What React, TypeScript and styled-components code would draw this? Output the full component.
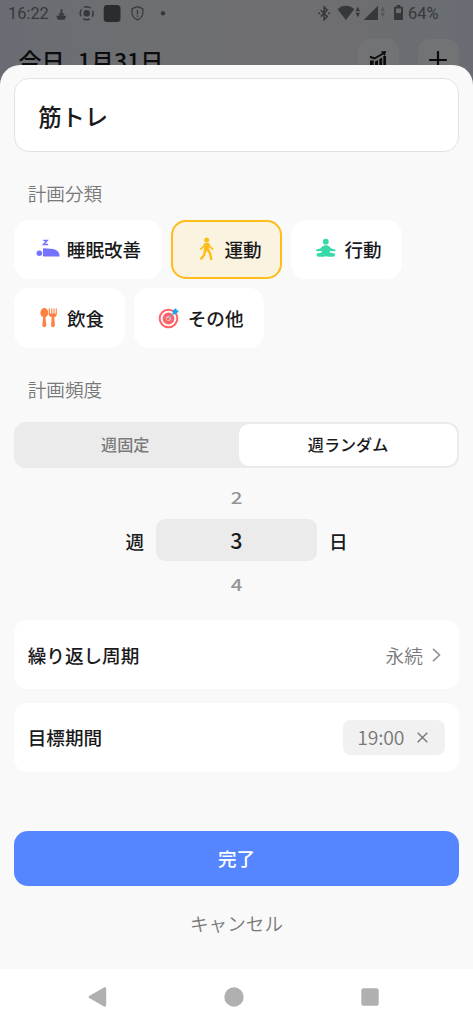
import React, { useState } from 'react';
import styled, { createGlobalStyle } from 'styled-components';

const GlobalStyle = createGlobalStyle`
  * { box-sizing: border-box; }
  body {
    margin: 0;
    background: #6d6e72;
    font-family: "Noto Sans CJK JP", sans-serif;
    color: #1a1a1c;
  }
  button { font: inherit; color: inherit; border: 0; padding: 0; background: none; }
  svg { display: block; flex: none; }
`;

const Screen = styled.div`
  width: 473px;
  height: 1024px;
  display: flex;
  flex-direction: column;
  overflow: hidden;
  background: linear-gradient(90deg, #696d73 0%, #6e6f72 35%, #6e6e71 75%, #696d73 100%);
`;

const StatusBar = styled.div`
  height: 27px;
  flex: none;
  display: flex;
  justify-content: space-between;
  padding: 0 35px 0 8px;
  font: 16.4px/27px Roboto, sans-serif;
  color: #36383b;
`;

const StatusGroup = styled.div`
  display: flex;
  align-items: center;
`;

const StatusText = styled.span<{ $w: number }>`
  width: ${p => p.$w}px;
  white-space: nowrap;
`;

const Header = styled.header`
  height: 37.5px;
  flex: none;
  display: flex;
  justify-content: space-between;
  padding: 12px 14px 0 18.5px;
`;

const HeaderTitle = styled.h1`
  margin: 4px 0 0;
  display: flex;
  gap: 13px;
  font-size: 23.1px;
  line-height: 34px;
  height: 34px;
  font-weight: 500;
  color: #0c0c0d;
`;

const HeaderActions = styled.div`
  display: flex;
  gap: 18.5px;
`;

const HeaderButton = styled.button`
  width: 41.5px;
  height: 41.5px;
  border-radius: 12px;
  background: #727375;
  display: flex;
  align-items: center;
  justify-content: center;
`;

const Sheet = styled.main`
  position: relative;
  height: 904px;
  flex: none;
  display: flex;
  flex-direction: column;
  padding: 13.5px 13.7px 0;
  border-radius: 20px 20px 0 0;
  background: #f9f9f9;
`;

const NameInput = styled.input`
  height: 73.5px;
  flex: none;
  width: 100%;
  border: 1px solid #e2e2e4;
  border-radius: 15px;
  background: #fff;
  padding: 2px 23.5px 0;
  font: 500 23.3px "Noto Sans CJK JP", sans-serif;
  color: #1a1a1c;
  outline: none;
`;

const SectionLabel = styled.h2<{ $top: number; $bottom: number }>`
  margin: ${p => p.$top}px 14px ${p => p.$bottom}px;
  font-size: 18.6px;
  line-height: 28px;
  font-weight: 350;
  color: #787878;
`;

const Chips = styled.div`
  display: flex;
  flex-wrap: wrap;
  gap: 9.3px;
`;

const Chip = styled.button<{ $active: boolean; $w: number }>`
  width: ${p => p.$w}px;
  height: 59.5px;
  display: flex;
  align-items: center;
  justify-content: flex-end;
  gap: 6.5px;
  padding: 0 18.5px 0 0;
  border: 2px solid ${p => (p.$active ? '#ffbd1a' : '#fff')};
  border-radius: 15px;
  background: ${p => (p.$active ? '#faf3e0' : '#fff')};
  font-size: 18.6px;
  font-weight: 500;
`;

const ChipIcon = styled.span`
  width: 24px;
  display: flex;
  justify-content: center;
`;

const ChipLabel = styled.span`
  line-height: 28px;
  padding-bottom: 1px;
`;

const Segments = styled.div`
  height: 46px;
  flex: none;
  display: flex;
  padding: 2px;
  border-radius: 12px;
  background: #ebebeb;
`;

const Segment = styled.button<{ $active: boolean }>`
  flex: ${p => (p.$active ? '0 0 218.5px' : '1')};
  padding: ${p => (p.$active ? '0 0 2px' : '0 4px 2px 0')};
  border-radius: 10px;
  background: ${p => (p.$active ? '#fff' : 'transparent')};
  color: ${p => (p.$active ? '#1a1a1c' : '#7a7a7a')};
  font-size: 16.1px;
  font-weight: 500;
`;

const Picker = styled.div`
  display: flex;
  justify-content: center;
  align-items: center;
  gap: 12px;
  margin-top: 8.2px;
  font-size: 18.6px;
  font-weight: 500;
`;

const Wheel = styled.div`
  width: 161px;
  display: flex;
  flex-direction: column;
  gap: 2px;
`;

const WheelOption = styled.span`
  height: 41.5px;
  line-height: 42.5px;
  text-align: center;
  font-size: 20.5px;
  color: #949494;
  transform: scaleY(0.8);
`;

const WheelValue = styled.span`
  height: 41.5px;
  border-radius: 9px;
  background: #ebebeb;
  text-align: center;
  font-size: 21.5px;
  line-height: 42px;
`;

const SettingRow = styled.section<{ $top: number }>`
  margin-top: ${p => p.$top}px;
  height: 69.3px;
  flex: none;
  display: flex;
  align-items: center;
  justify-content: space-between;
  padding: 0 14px;
  border-radius: 14px;
  background: #fff;
  font-size: 18.6px;
`;

const RowLabel = styled.span`
  padding-bottom: 1px;
  font-weight: 500;
`;

const RowValue = styled.span`
  display: flex;
  align-items: center;
  gap: 9px;
  padding-right: 4.5px;
  font-weight: 350;
  color: #787878;
`;

const TimeTag = styled.button`
  width: 102px;
  height: 35.5px;
  display: flex;
  align-items: center;
  justify-content: space-between;
  padding: 0 17px 0 14px;
  border-radius: 8px;
  background: #f1f1f1;
  color: #787878;
  font-size: 19.4px;
  letter-spacing: -0.2px;
  font-weight: 350;
`;

const TimeText = styled.span`
  padding-bottom: 1px;
`;

const SubmitButton = styled.button`
  margin-top: 58.6px;
  height: 55px;
  flex: none;
  padding-bottom: 2px;
  border-radius: 14px;
  background: #5686ff;
  color: #fff;
  font-size: 18.6px;
  font-weight: 500;
`;

const CancelButton = styled.button`
  margin: 23px auto 0;
  height: 28px;
  font-size: 18.6px;
  line-height: 28px;
  font-weight: 350;
  color: #787878;
`;

const NavBar = styled.nav`
  flex: 1;
  display: flex;
  align-items: center;
  justify-content: space-between;
  padding: 2px 94.5px 0 88px;
  background: #fff;
`;

const StatusIconsLeft = () => (
  <svg width="120" height="27" viewBox="50 0 120 27" fill="#36383b">
    <path d="M60.8 9h1.5v4.5h1.6v2h-5v-2h1.5v-2.7h.4zM56.2 15.8h10l-1.6 3.9h-6.8z" />
    <circle cx="86.7" cy="13.3" r="3.2" />
    <circle cx="86.7" cy="13.3" r="6.5" fill="none" stroke="#36383b" strokeWidth="1.5" strokeDasharray="7.2 3" strokeDashoffset="3.6" />
    <rect x="103.7" y="5" width="16.8" height="17" rx="3.5" fill="#2a2c2e" />
    <path d="M137.4 6.6l5.4 2v4.1c0 3.3-2.2 5.8-5.4 7.2-3.2-1.4-5.4-3.9-5.4-7.2V8.6z" fill="none" stroke="#36383b" strokeWidth="1.2" />
    <path d="M136.8 9.7h1.3v4.6h-1.3zM136.8 15.4h1.3v1.4h-1.3z" />
    <circle cx="163" cy="13.2" r="2.2" />
  </svg>
);

const StatusIconsRight = () => (
  <svg width="92" height="27" viewBox="316 0 92 27" fill="#36383b">
    <path d="M320.7 10l6.5 6.5-3.1 3.1V7l3.1 3.1-6.5 6.5" fill="none" stroke="#36383b" strokeWidth="1.5" />
    <circle cx="319.2" cy="13.3" r="1" />
    <circle cx="329" cy="13.3" r="1" />
    <path d="M337.6 9.3c4.8-4.6 11.8-4.6 16.6 0L345.9 20z" />
    <path d="M357.8 6.8l2.3 4.5h-4.6zM357.8 17.3l2.3-4.5h-4.6z" />
    <path d="M378 5.7V20h-14.3z" />
    <path d="M382.8 6.8l2.2 4.5h-4.4zM382.8 17.3l2.2-4.5h-4.4z" fill="#55575a" />
    <path fillRule="evenodd" d="M396.7 5h3.7v1.7h1.6c.6 0 1 .4 1 1v11.2c0 .6-.4 1-1 1h-7c-.6 0-1-.4-1-1V7.7c0-.6.4-1 1-1h1.7zM396 8.5v4.5h5V8.5z" />
  </svg>
);

const ChartIcon = () => (
  <svg width="18" height="20" viewBox="0 0 18 20" fill="#0c0c0d">
    <path d="M1 10.5h3.7V19H1zM6 11.5l3-1.5v9H6zM10.3 9l2.9-1.5V19h-2.9zM14.3 6H17v13h-2.7z" />
    <path d="M1 6.8l4.5 1.7 8.7-5" fill="none" stroke="#0c0c0d" strokeWidth="2" />
    <path d="M11.8 1.4L17.2 1l-1.4 5z" />
  </svg>
);

const PlusIcon = () => (
  <svg width="18" height="18" viewBox="0 0 18 18" stroke="#0c0c0d" strokeWidth="2.2" strokeLinecap="round">
    <path d="M9 1v16M1 9h16" />
  </svg>
);

const SleepIcon = () => (
  <svg width="24" height="22" viewBox="0 0 24 22" fill="#7472ff">
    <path d="M7.3 2.4h3.9L7.5 6.6h4.6" fill="none" stroke="#7472ff" strokeWidth="1.5" />
    <circle cx="3.4" cy="15.2" r="2.8" />
    <path d="M7 10.3c5.8.2 9.900.4 12.500 1.500 2.700 1.200 4 3.300 4.100 6.600H8c-.7 0-1-.3-1-1z" />
  </svg>
);

const WalkIcon = () => (
  <svg width="24" height="24" viewBox="0 0 24 24" fill="#ffbd1a">
    <circle cx="12.7" cy="2.9" r="2.5" />
    <path d="M10.5 6h4.3l.4 8.5H9.8z" />
    <path d="M11 7.1L9.3 10l-2.5 2M14.5 7l1.500 3 2.700 2" fill="none" stroke="#ffbd1a" strokeWidth="1.7" strokeLinecap="round" />
    <path d="M11.1 12.5l-.7 5.300L7.300 21.600M14 12.500l2.200 4.500 1 5" fill="none" stroke="#ffbd1a" strokeWidth="2.4" strokeLinecap="round" />
  </svg>
);

const MeditateIcon = () => (
  <svg width="22" height="22" viewBox="0 0 22 22" fill="#38d9a9">
    <circle cx="10.8" cy="3.7" r="2.9" />
    <path d="M7.7 8.3c1.5-1.5 4.9-1.5 6.4 0l2.2 2.2 3.7 1c1 .4.5 2-.7 1.8l-4.6-.4.2 1.600 4 .8c1.600.4 1.500 3.300-.8 3.500-2.800.2-5-.1-7.300-.6-2.300.5-4.500.8-7.300.6-2.300-.2-2.400-3.100-.8-3.500l4-.8.2-1.600-4.600.4c-1.200.2-1.700-1.400-.7-1.800l3.700-1z" />
  </svg>
);

const MealIcon = () => (
  <svg width="17" height="22" viewBox="0 0 17 22" fill="#ff8140">
    <ellipse cx="4.3" cy="5.8" rx="3.9" ry="4.7" />
    <path d="M3.3 9h2l1 9c.1 2.700-4.100 2.700-4 0zM8.700 1.400h1.200v5h1.300v-5h1.100v5h1.200v-5h1.100v5h1.200v-5h1v5.700c0 1.800-1 2.900-2.600 3.100l.7 8c0 2.500-3.900 2.500-3.800 0l.6-8c-1.800-.3-3-1.400-3-3.100z" />
  </svg>
);

const TargetIcon = () => (
  <svg width="22" height="22" viewBox="0 0 22 22" fill="none">
    <circle cx="10.5" cy="11.5" r="8.8" stroke="#ff6468" strokeWidth="2" />
    <circle cx="10.5" cy="11.5" r="4.1" stroke="#ff6468" strokeWidth="3.6" />
    <circle cx="10.5" cy="11.5" r="2.3" fill="#ffb5b8" />
    <circle cx="10" cy="12" r="1.3" fill="#ff6468" />
    <path d="M10.5 11.5l6-6" stroke="#8fa0c0" strokeWidth="1.2" />
    <path d="M14.7 3.7L18.1 1l.5 2.2 2.400.5-3 3.400-3.200.1z" fill="#18a5ed" />
  </svg>
);

const ChevronIcon = () => (
  <svg width="9" height="16" viewBox="0 0 9 16" fill="none" stroke="#929292" strokeWidth="1.6">
    <path d="M1 1.8L7.5 8 1 14.2" />
  </svg>
);

const CloseIcon = () => (
  <svg width="11" height="11" viewBox="0 0 11 11" stroke="#777" strokeWidth="1.4">
    <path d="M.7.7l9.600 9.600M10.300.7L.7 10.300" />
  </svg>
);

const BackIcon = () => (
  <svg width="19" height="20" viewBox="0 0 19 20" fill="#b0b0b0">
    <path d="M1.2 9.1L16 .5c1.100-.6 2.200 0 2.200 1.200v16.600c0 1.200-1.100 1.800-2.200 1.200L1.200 10.900c-.8-.5-.8-1.300 0-1.800z" />
  </svg>
);

const HomeIcon = () => (
  <svg width="20" height="20" viewBox="0 0 20 20" fill="#b0b0b0">
    <circle cx="10" cy="10" r="9.7" />
  </svg>
);

const RecentsIcon = () => (
  <svg width="18" height="18" viewBox="0 0 18 18" fill="#b0b0b0">
    <rect x=".3" y=".3" width="17.4" height="17.4" rx="2" />
  </svg>
);

const categories = [
  { name: '睡眠改善', width: 148, Icon: SleepIcon },
  { name: '運動', width: 111.2, Icon: WalkIcon },
  { name: '行動', width: 110.7, Icon: MeditateIcon },
  { name: '飲食', width: 111, Icon: MealIcon },
  { name: 'その他', width: 130, Icon: TargetIcon },
];

export default function App() {
  const [name, setName] = useState('筋トレ');
  const [category, setCategory] = useState('運動');
  return (
    <Screen>
      <GlobalStyle />
      <StatusBar>
        <StatusGroup>
          <StatusText $w={42}>16:22</StatusText>
          <StatusIconsLeft />
        </StatusGroup>
        <StatusGroup>
          <StatusIconsRight />
          <StatusText $w={30}>64%</StatusText>
        </StatusGroup>
      </StatusBar>
      <Header>
        <HeaderTitle><span>今日</span><span>1月31日</span></HeaderTitle>
        <HeaderActions>
          <HeaderButton><ChartIcon /></HeaderButton>
          <HeaderButton><PlusIcon /></HeaderButton>
        </HeaderActions>
      </Header>
      <Sheet>
        <NameInput value={name} onChange={e => setName(e.target.value)} />
        <SectionLabel $top={27.5} $bottom={12.5}>計画分類</SectionLabel>
        <Chips>
          {categories.map(({ name: label, width, Icon }) => (
            <Chip key={label} $w={width} $active={label === category} onClick={() => setCategory(label)}>
              <ChipIcon><Icon /></ChipIcon>
              <ChipLabel>{label}</ChipLabel>
            </Chip>
          ))}
        </Chips>
        <SectionLabel $top={27.5} $bottom={18.3}>計画頻度</SectionLabel>
        <Segments>
          <Segment $active={false}>週固定</Segment>
          <Segment $active>週ランダム</Segment>
        </Segments>
        <Picker>
          <span>週</span>
          <Wheel>
            <WheelOption>2</WheelOption>
            <WheelValue>3</WheelValue>
            <WheelOption>4</WheelOption>
          </Wheel>
          <span>日</span>
        </Picker>
        <SettingRow $top={15.6}>
          <RowLabel>繰り返し周期</RowLabel>
          <RowValue>永続<ChevronIcon /></RowValue>
        </SettingRow>
        <SettingRow $top={13.5}>
          <RowLabel>目標期間</RowLabel>
          <TimeTag><TimeText>19:00</TimeText><CloseIcon /></TimeTag>
        </SettingRow>
        <SubmitButton>完了</SubmitButton>
        <CancelButton>キャンセル</CancelButton>
      </Sheet>
      <NavBar>
        <BackIcon />
        <HomeIcon />
        <RecentsIcon />
      </NavBar>
    </Screen>
  );
}
